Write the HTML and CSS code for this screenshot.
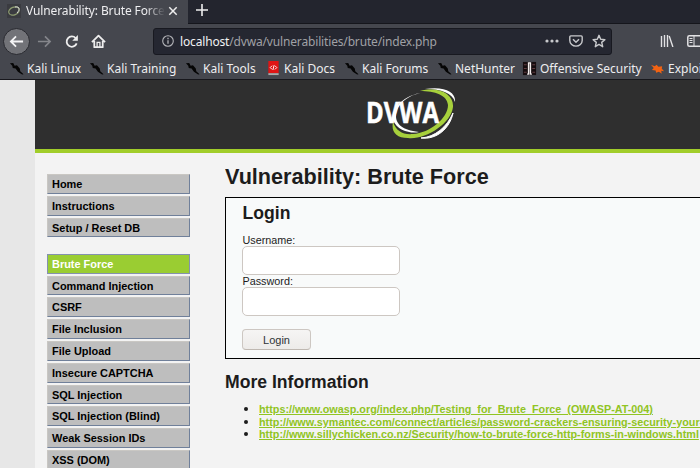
FILE: index.html
```html
<!DOCTYPE html>
<html lang="en">
<head>
  <meta charset="UTF-8">
  <title>Vulnerability: Brute Force</title>
  <link rel="stylesheet" href="styles.css">
</head>
<body>
  <svg class="defs" width="0" height="0">
    <symbol id="kali" viewBox="0 0 16 16">
      <path d="M1 2.500l3.500-.5 1.500 3 2.500-.5 3 3.500.5 3 3.500 3-1.500.5-4.500-3-2.500-3.500-3-.500-.5-2.500z" fill="#050505"/>
    </symbol>
  </svg>
  <header class="browser">
    <div class="tabs">
      <div class="tab">
        <svg class="favicon" viewBox="0 0 14 14"><rect width="14" height="14" fill="#3a3b40"/><ellipse cx="7" cy="7" rx="5.500" ry="3.800" transform="rotate(-20 7 7)" fill="none" stroke="#8d9c70" stroke-width="1.200"/><path d="M8 3c5-1 5 3 2 6" fill="none" stroke="#ddd"/></svg>
        <span class="tab-title">Vulnerability: Brute Force</span>
        <svg class="tab-close" viewBox="0 0 10 10"><path d="M1.300 1.300l7.400 7.400M8.700 1.300L1.300 8.700" stroke="#eee" stroke-width="1.500"/></svg>
      </div>
      <svg class="new-tab" viewBox="0 0 12 12"><path d="M6 0v12M0 6h12" stroke="#eee" stroke-width="1.600"/></svg>
    </div>
    <div class="toolbar">
      <div class="back"><svg viewBox="0 0 16 16"><path d="M15 8H2M7.500 2.500L2 8l5.500 5.500" fill="none" stroke="#f4f4f5" stroke-width="1.900"/></svg></div>
      <svg class="forward" viewBox="0 0 16 16"><path d="M1 8h13M8.500 2.500L14 8l-5.500 5.500" fill="none" stroke="#85868b" stroke-width="1.700"/></svg>
      <svg class="reload" viewBox="0 0 16 16"><path d="M12.500 4.500A5.500 5.500 0 1 0 13.500 10" fill="none" stroke="#eee" stroke-width="1.900"/><path d="M14.800 1v6.200H8.800z" fill="#eee"/></svg>
      <svg class="home" viewBox="0 0 16 16"><path d="M1 8.700L8 1.800l7 6.900M3.500 7.500V14h9V7.500" fill="none" stroke="#eee" stroke-width="1.900" stroke-linejoin="round"/><path d="M6.500 14V9h3v5" fill="none" stroke="#eee" stroke-width="1.400"/></svg>
      <div class="urlbar">
        <svg class="info" viewBox="0 0 12 12"><circle cx="6" cy="6" r="5.300" fill="none" stroke="#b4b5b9" stroke-width="1.100"/><path d="M6 5.200v3.600M6 2.800v1.400" stroke="#b4b5b9" stroke-width="1.300"/></svg>
        <span class="url"><b>localhost</b>/dvwa/vulnerabilities/brute/index.php</span>
        <svg class="dots" viewBox="0 0 14 4"><g fill="#c8c9cc"><circle cx="2" cy="2" r="1.600"/><circle cx="7" cy="2" r="1.600"/><circle cx="12" cy="2" r="1.600"/></g></svg>
        <svg class="pocket" viewBox="0 0 14 12"><path d="M1.800.9h10.400a1 1 0 0 1 1 1v3.500a6.200 5.700 0 0 1-12.400 0V1.900a1 1 0 0 1 1-1z" fill="none" stroke="#c8c9cc" stroke-width="1.400"/><path d="M4 4.300l3 2.900 3-2.900" fill="none" stroke="#c8c9cc" stroke-width="1.500"/></svg>
        <svg class="star" viewBox="0 0 14 14"><path d="M7 1.300l1.700 3.900 4.200.4-3.200 2.800 1 4.300L7 10.400l-3.700 2.300 1-4.300L1.100 5.600l4.200-.4z" fill="none" stroke="#c8c9cc" stroke-width="1.400" stroke-linejoin="round"/></svg>
      </div>
      <svg class="library" viewBox="0 0 14 12"><path d="M1.500 1v11M4.500 0v12M7.500 0v12M9.200 1l3.700 11" stroke="#e2e2e4" stroke-width="1.400"/></svg>
      <svg class="sidebar-icon" viewBox="0 0 16 12"><rect x=".8" y=".8" width="14.400" height="10.400" rx="1.500" fill="none" stroke="#e2e2e4" stroke-width="1.500"/><path d="M7 1v10M2.500 3.500h3M2.500 5.500h3M2.500 7.500h3" stroke="#e2e2e4"/></svg>
    </div>
    <nav class="bookmarks">
      <a class="b1"><svg viewBox="0 0 16 16"><use href="#kali"/></svg><span>Kali Linux</span></a>
      <a class="b2"><svg viewBox="0 0 16 16"><use href="#kali"/></svg><span>Kali Training</span></a>
      <a class="b3"><svg viewBox="0 0 16 16"><use href="#kali"/></svg><span>Kali Tools</span></a>
      <a class="b4"><svg viewBox="0 0 16 16"><path d="M2.500 0h11v13h-11z" fill="#df1515"/><path d="M2.500 13h11v2h-11z" fill="#aaa"/><path d="M6.500 5L4.500 7l2 2M9.500 5l2 2-2 2M8.600 4.500L7.400 9.500" fill="none" stroke="#fff"/></svg><span>Kali Docs</span></a>
      <a class="b5"><svg viewBox="0 0 16 16"><use href="#kali"/></svg><span>Kali Forums</span></a>
      <a class="b6"><svg viewBox="0 0 16 16"><use href="#kali"/></svg><span>NetHunter</span></a>
      <a class="b7"><svg viewBox="0 0 16 16"><path d="M1 1h14v14H1z" fill="#160d0f"/><path d="M2 4h3M2 8h3M2 12h3M11 4h3M11 8h3M11 12h3" stroke="#664044"/><path d="M5.500 14h1.500V2h2v12h1.500" fill="none" stroke="#f4eeee" stroke-width="1.500"/></svg><span>Offensive Security</span></a>
      <a class="b8"><svg viewBox="0 0 16 16"><path d="M1 4l4 1.500L7 4l2 2 4-.5-.5 2.500L15 11l-3-.5.500 3-3-2-3 1-.5-2.500-4-.500 2-2z" fill="#f26313"/></svg><span>Exploit-DB</span></a>
    </nav>
  </header>

  <div class="page">
    <div class="header">
      <svg class="logo" viewBox="0 0 92 54">
        <path d="M58 2C78-1 89 5 88 15C85 6 75 2 58 2z" fill="#fff"/>
        <path d="M86 26C83 41 70 53 54 51C68 50 80 40 86 26z" fill="#fff" stroke="#fff"/>
        <path d="M53 6C34 10 24 23 26 33C30 44 45 47 52 45C35 43 29 37 29 29C29 18 40 9 53 6z" fill="#fff"/>
        <path d="M53 4C72-1 87 7 86 20C84 37 58 53 41 51C29 51 24 45 26 35C29 44 36 48 46 47C63 46 81 31 81 18C80 8 68 4 53 4z" fill="#a7d03c"/>
        <text x="-1" y="36" textLength="73" lengthAdjust="spacingAndGlyphs">DVWA</text>
      </svg>
    </div>
    <div class="content">
      <ul class="menu">
        <li>Home</li>
        <li>Instructions</li>
        <li>Setup / Reset DB</li>
      </ul>
      <ul class="menu">
        <li class="selected">Brute Force</li>
        <li>Command Injection</li>
        <li>CSRF</li>
        <li>File Inclusion</li>
        <li>File Upload</li>
        <li>Insecure CAPTCHA</li>
        <li>SQL Injection</li>
        <li>SQL Injection (Blind)</li>
        <li>Weak Session IDs</li>
        <li>XSS (DOM)</li>
      </ul>
    </div>
    <main class="main-body">
      <h1>Vulnerability: Brute Force</h1>
      <div class="vulnerable">
        <h2>Login</h2>
        <form>
          <label for="username">Username:</label>
          <input type="text" id="username">
          <label for="password">Password:</label>
          <input type="password" id="password">
          <button type="button">Login</button>
        </form>
      </div>
      <h2 class="more">More Information</h2>
      <ul class="links">
        <li><a href="#">https://www.owasp.org/index.php/Testing_for_Brute_Force_(OWASP-AT-004)</a></li>
        <li><a href="#">http://www.symantec.com/connect/articles/password-crackers-ensuring-security-your-password</a></li>
        <li><a href="#">http://www.sillychicken.co.nz/Security/how-to-brute-force-http-forms-in-windows.html</a></li>
      </ul>
    </main>
  </div>
</body>
</html>
```
FILE: styles.css
```css
* {
  box-sizing: border-box;
}

body {
  margin: 0;
  height: 468px;
  overflow: hidden;
  background: #e7e7e7;
  font-family: "Liberation Sans", Arial, sans-serif;
  color: #1c1c1c;
}

svg {
  display: block;
  flex-shrink: 0;
}

.defs {
  position: absolute;
}

/* browser chrome */
.browser {
  height: 80px;
  background: #45474e;
  border-bottom: 1px solid #17171c;
  font-family: "Noto Sans", sans-serif;
  font-size: 12px;
  color: #eeeef0;
  white-space: nowrap;
  overflow: hidden;
}

.tabs {
  display: flex;
  height: 24px;
  background: #23252e;
  border-bottom: 1px solid #15161c;
}

.tab {
  display: flex;
  align-items: center;
  width: 188px;
  height: 24px;
  padding: 0 10px 3px 7px;
  background: #45474e;
}

.favicon {
  width: 14px;
  height: 14px;
}

.tab-title {
  width: 139px;
  margin-left: 5px;
  overflow: hidden;
  font-size: 12px;
  letter-spacing: -0.12px;
  -webkit-mask-image: linear-gradient(90deg, #000 120px, transparent 139px);
  mask-image: linear-gradient(90deg, #000 120px, transparent 139px);
}

.tab-close {
  width: 10px;
  height: 10px;
  margin-left: 4px;
}

.new-tab {
  width: 12px;
  height: 12px;
  margin: 4px 0 0 8px;
}

.toolbar {
  display: flex;
  align-items: center;
  height: 34px;
}

.back {
  display: flex;
  align-items: center;
  justify-content: center;
  flex-shrink: 0;
  width: 27px;
  height: 27px;
  margin-left: 3px;
  border-radius: 50%;
  border: 1px solid #292a30;
  background: #727378;
}

.back svg, .forward, .home, .reload {
  width: 15px;
  height: 15px;
}

.forward {
  margin-left: 7px;
}

.reload {
  margin-left: 12px;
}

.home {
  margin-left: 12px;
}

.urlbar {
  display: flex;
  align-items: center;
  flex-shrink: 0;
  width: 459px;
  height: 27px;
  margin-left: 47px;
  padding-left: 8px;
  background: #252731;
  border: 1px solid #181920;
  border-radius: 3px;
}

.info {
  width: 12px;
  height: 12px;
}

.url {
  width: 308px;
  margin-left: 6px;
  letter-spacing: -0.16px;
  color: #a0a1a6;
}

.url b {
  font-weight: normal;
  color: #f2f2f4;
}

.dots {
  width: 14px;
  height: 4px;
  margin-left: 57px;
}

.pocket {
  width: 14px;
  height: 12px;
  margin-left: 10px;
}

.star {
  width: 14px;
  height: 14px;
  margin-left: 9px;
}

.library {
  width: 14px;
  height: 12px;
  margin-left: 48px;
}

.sidebar-icon {
  width: 16px;
  height: 12px;
  margin-left: 13px;
}

.bookmarks {
  display: flex;
  height: 20px;
  padding-left: 9px;
}

.bookmarks a {
  display: flex;
  align-items: center;
  flex-shrink: 0;
  gap: 3px;
}

.bookmarks svg {
  width: 15px;
  height: 15px;
}

.b1 { width: 80px; }
.b2 { width: 96px; }
.b3 { width: 81px; }
.b4 { width: 78px; }
.b5 { width: 93px; }
.b6 { width: 85px; }
.b7 { width: 128px; }
.b8 { width: 90px; }

/* DVWA page */
.page {
  display: grid;
  grid-template-columns: 190px 1fr;
  grid-template-rows: 73px 1fr;
  height: 388px;
  margin-left: 35px;
  background: #f3f3f3;
}

.header {
  grid-column: 1 / 3;
  height: 73px;
  padding: 7px 0 0 332px;
  background: #2f2f2f;
  border-bottom: 4px solid #a1cd2a;
}

.logo {
  width: 92px;
  height: 54px;
}

.logo text {
  font: bold 28px "Open Sans", sans-serif;
  fill: #fff;
  stroke: #fff;
  stroke-width: 0.5px;
}

.menu {
  width: 143px;
  margin: 21px 0 0 12px;
  padding: 0;
  list-style: none;
  font-size: 10.95px;
  font-weight: bold;
  color: #000;
}

.menu + .menu {
  margin-top: 16.5px;
}

.menu li {
  height: 19.8px;
  margin-bottom: 2px;
  padding-left: 4px;
  line-height: 18px;
  background: #bebebe;
  border: 1px solid #c9c7c3;
  border-right-color: #70809a;
  border-bottom: 1px solid #70809a;
}

.menu .selected {
  background: #9acd32;
  border-color: #8491ae;
  color: #fff;
}

.main-body {
  min-width: 0;
  padding-top: 11px;
  overflow: hidden;
}

h1, h2 {
  margin: 0;
}

h1 {
  font-size: 21.65px;
  line-height: 26px;
}

h2 {
  font-size: 17.6px;
  line-height: 20px;
}

.vulnerable {
  height: 162px;
  margin-top: 7px;
  padding: 5px 16.5px;
  background: #f8fafa;
  border: 1px solid #000;
  border-right: 0;
}

.vulnerable form {
  display: flex;
  flex-direction: column;
  align-items: flex-start;
  margin-top: 11px;
  font-size: 10.8px;
}

.vulnerable label {
  height: 12px;
  line-height: 12px;
}

.vulnerable input {
  width: 158px;
  height: 29px;
  margin-left: -0.5px;
  background: #fff;
  border: 1px solid #cdc7c2;
  border-radius: 5px;
}

.vulnerable button {
  width: 69px;
  height: 21px;
  margin: 13px 0 0 -0.5px;
  padding: 0;
  background: linear-gradient(#f6f5f4, #edebe9);
  border: 1px solid #cdc7c2;
  border-bottom-color: #bfb8b1;
  border-radius: 4px;
  font-family: inherit;
  font-size: 11px;
  color: #2e3436;
}

.more {
  margin-top: 13px;
}

.links {
  margin: 10px 0 0;
  padding-left: 34px;
  font-size: 10.81px;
  line-height: 13px;
  white-space: nowrap;
}

.links li {
  height: 12.7px;
}

.links li::marker {
  font-size: 14px;
}

.links a {
  font-weight: bold;
  color: #90c423;
}
```
